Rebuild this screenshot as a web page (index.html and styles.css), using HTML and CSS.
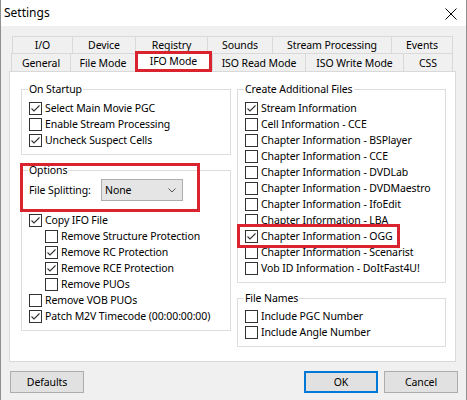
FILE: index.html
```html
<!DOCTYPE html>
<html>
<head>
<meta charset="utf-8">
<link rel="stylesheet" href="styles.css">
</head>
<body>
<div class="window">
  <div class="titlebar">
    <span class="title">Settings</span>
    <svg class="close" width="12" height="12" viewBox="0 0 12 12"><path d="M0.5 0.5 L11.5 11.5 M11.5 0.5 L0.5 11.5" stroke="#000" stroke-width="1" fill="none"/></svg>
  </div>
  <div class="content">
    <div class="tabs">
      <div class="tabrow row1">
        <div class="tab w-io">I/O</div>
        <div class="tab w-device">Device</div>
        <div class="tab w-registry">Registry</div>
        <div class="tab w-sounds">Sounds</div>
        <div class="tab w-stream">Stream Processing</div>
        <div class="tab w-events">Events</div>
      </div>
      <div class="tabrow row2">
        <div class="tab w-general">General</div>
        <div class="tab w-filemode">File Mode</div>
        <div class="tab selected w-ifo">IFO Mode</div>
        <div class="tab w-isoread">ISO Read Mode</div>
        <div class="tab w-isowrite">ISO Write Mode</div>
        <div class="tab w-css">CSS</div>
      </div>
    </div>
    <div class="panel">
      <div class="col left">
        <fieldset class="group startup">
          <legend>On Startup</legend>
          <div class="cbrow"><span class="cb"><svg width="11" height="11" viewBox="0 0 11 11"><path d="M1.5 5.5 L4 8 L9.5 2.5" stroke="#333" stroke-width="1.1" fill="none"/></svg></span><span>Select Main Movie PGC</span></div>
          <div class="cbrow"><span class="cb"></span><span>Enable Stream Processing</span></div>
          <div class="cbrow"><span class="cb"><svg width="11" height="11" viewBox="0 0 11 11"><path d="M1.5 5.5 L4 8 L9.5 2.5" stroke="#333" stroke-width="1.1" fill="none"/></svg></span><span>Uncheck Suspect Cells</span></div>
        </fieldset>
        <fieldset class="group options">
          <legend>Options</legend>
          <div class="split">
            <span class="split-label">File Splitting:</span>
            <div class="select"><span>None</span><svg width="8" height="5" viewBox="0 0 8 5"><path d="M0.5 0.5 L4 4 L7.5 0.5" stroke="#555" stroke-width="1" fill="none"/></svg></div>
          </div>
          <div class="cblist">
            <div class="cbrow"><span class="cb"><svg width="11" height="11" viewBox="0 0 11 11"><path d="M1.5 5.5 L4 8 L9.5 2.5" stroke="#333" stroke-width="1.1" fill="none"/></svg></span><span>Copy IFO File</span></div>
            <div class="cbrow sub"><span class="cb"></span><span>Remove Structure Protection</span></div>
            <div class="cbrow sub"><span class="cb"><svg width="11" height="11" viewBox="0 0 11 11"><path d="M1.5 5.5 L4 8 L9.5 2.5" stroke="#333" stroke-width="1.1" fill="none"/></svg></span><span>Remove RC Protection</span></div>
            <div class="cbrow sub"><span class="cb"><svg width="11" height="11" viewBox="0 0 11 11"><path d="M1.5 5.5 L4 8 L9.5 2.5" stroke="#333" stroke-width="1.1" fill="none"/></svg></span><span>Remove RCE Protection</span></div>
            <div class="cbrow sub"><span class="cb"></span><span>Remove PUOs</span></div>
            <div class="cbrow"><span class="cb"></span><span>Remove VOB PUOs</span></div>
            <div class="cbrow"><span class="cb"><svg width="11" height="11" viewBox="0 0 11 11"><path d="M1.5 5.5 L4 8 L9.5 2.5" stroke="#333" stroke-width="1.1" fill="none"/></svg></span><span>Patch M2V Timecode (00:00:00:00)</span></div>
          </div>
        </fieldset>
        <div class="mark mark-options"></div>
      </div>
      <div class="col right">
        <fieldset class="group create">
          <legend>Create Additional Files</legend>
          <div class="cbrow"><span class="cb"><svg width="11" height="11" viewBox="0 0 11 11"><path d="M1.5 5.5 L4 8 L9.5 2.5" stroke="#333" stroke-width="1.1" fill="none"/></svg></span><span>Stream Information</span></div>
          <div class="cbrow"><span class="cb"></span><span>Cell Information - CCE</span></div>
          <div class="cbrow"><span class="cb"></span><span>Chapter Information - BSPlayer</span></div>
          <div class="cbrow"><span class="cb"></span><span>Chapter Information - CCE</span></div>
          <div class="cbrow"><span class="cb"></span><span>Chapter Information - DVDLab</span></div>
          <div class="cbrow"><span class="cb"></span><span>Chapter Information - DVDMaestro</span></div>
          <div class="cbrow"><span class="cb"></span><span>Chapter Information - IfoEdit</span></div>
          <div class="cbrow"><span class="cb"></span><span>Chapter Information - LBA</span></div>
          <div class="cbrow marked"><span class="cb"><svg width="11" height="11" viewBox="0 0 11 11"><path d="M1.5 5.5 L4 8 L9.5 2.5" stroke="#333" stroke-width="1.1" fill="none"/></svg></span><span>Chapter Information - OGG</span><span class="mark mark-ogg"></span></div>
          <div class="cbrow"><span class="cb"></span><span>Chapter Information - Scenarist</span></div>
          <div class="cbrow"><span class="cb"></span><span>Vob ID Information - DoItFast4U!</span></div>
        </fieldset>
        <fieldset class="group names">
          <legend>File Names</legend>
          <div class="cbrow"><span class="cb"></span><span>Include PGC Number</span></div>
          <div class="cbrow"><span class="cb"></span><span>Include Angle Number</span></div>
        </fieldset>
      </div>
    </div>
    <div class="buttons">
      <button class="btn">Defaults</button>
      <div class="btn-group">
        <button class="btn default">OK</button>
        <button class="btn">Cancel</button>
      </div>
    </div>
  </div>
</div>
</body>
</html>
```

FILE: styles.css
```css
* { box-sizing: border-box; }

body {
  margin: 0;
  background: #f0f0f0;
  font-family: "Noto Sans", "DejaVu Sans", sans-serif;
  font-size: 10.5px;
  letter-spacing: -0.1px;
  line-height: 16px;
  color: #000;
}

.window {
  width: 467px;
  height: 400px;
  background: #f0f0f0;
  border-left: 1px solid #8f8f8f;
  border-right: 1px solid #8f8f8f;
  display: flex;
  flex-direction: column;
}

.titlebar {
  height: 26px;
  flex: none;
  background: #fff;
  display: flex;
  align-items: center;
  justify-content: space-between;
  padding: 0 9px 0 3px;
}

.title {
  font-size: 12px;
  letter-spacing: 0;
}

.close { display: block; margin-top: 1px; }

.content {
  padding: 10px 9px 0 8px;
}

.tabrow {
  display: flex;
}

.row1 { margin-left: 3px; height: 17px; }
.row2 { margin-left: 2px; height: 18px; }

.tab {
  flex: none;
  display: flex;
  align-items: center;
  justify-content: center;
  border-top: 1px solid #d9d9d9;
  border-left: 1px solid #d9d9d9;
  white-space: nowrap;
}

.tab:last-child { border-right: 1px solid #d9d9d9; }

.tab.selected {
  position: relative;
  z-index: 1;
  background: #fff;
  height: 21px;
  margin-top: -2px;
  border: none;
  outline: 3px solid #d9232e;
  outline-offset: -3px;
  padding-bottom: 2px;
}

.tab.selected + .tab { border-left: 1px solid #d9d9d9; }

.w-io { width: 60px; }
.w-device { width: 63px; }
.w-registry { width: 72px; }
.w-sounds { width: 65px; }
.w-stream { width: 119px; }
.w-events { width: 62px; }
.w-general { width: 59px; }
.w-filemode { width: 65px; }
.w-ifo { width: 77px; }
.w-isoread { width: 93px; }
.w-isowrite { width: 98px; }
.w-css { width: 50px; }

.panel {
  width: 447px;
  height: 291px;
  background: #fff;
  border: 1px solid #d9d9d9;
  padding: 9px 9px 0 11px;
  display: flex;
  gap: 6px;
  align-items: flex-start;
}

.col {
  display: flex;
  flex-direction: column;
  position: relative;
}

.col.left { width: 210px; }
.col.right { width: 209px; }

.group {
  margin: 0;
  border: 1px solid #dcdcdc;
  padding: 3px 7px 6px 7px;
  min-width: 0;
}

.group legend {
  padding: 0 1px;
  margin-left: -1px;
  line-height: 16px;
}

.group.options { margin-top: 7px; padding-top: 1px; }
.group.names { margin-top: 7px; padding-top: 2px; }

.cbrow {
  display: flex;
  align-items: center;
  height: 16px;
  gap: 3px;
  white-space: nowrap;
}

.cbrow.sub { margin-left: 16px; }
.cbrow.marked { position: relative; align-self: flex-start; }

.cb {
  width: 13px;
  height: 13px;
  flex: none;
  border: 1px solid #333;
  background: #fff;
  display: flex;
  align-items: center;
  justify-content: center;
}

.cb svg { display: block; }

.split {
  display: flex;
  align-items: center;
  height: 22px;
}

.split-label { width: 72px; flex: none; }

.select {
  width: 82px;
  height: 22px;
  background: #e5e5e5;
  border: 1px solid #adadad;
  display: flex;
  align-items: center;
  justify-content: space-between;
  padding: 0 6px 0 3px;
}

.cblist { margin-top: 11px; }

.mark {
  position: absolute;
  border: 3px solid #d9232e;
}

.mark-options {
  left: -1px;
  top: 82px;
  width: 180px;
  height: 49px;
}

.mark-ogg {
  left: -8px;
  top: -4px;
  width: 163px;
  height: 24px;
}

.buttons {
  margin-top: 9px;
  display: flex;
  justify-content: space-between;
  padding-left: 1px;
  width: 449px;
}

.btn-group {
  display: flex;
  gap: 6px;
}

.btn {
  width: 74px;
  height: 22px;
  background: #e1e1e1;
  border: 1px solid #adadad;
  font-family: inherit;
  font-size: 10.5px;
  letter-spacing: -0.1px;
  color: #000;
  padding: 0;
  margin: 0;
}

.btn.default { border: 2px solid #0078d7; }
```
